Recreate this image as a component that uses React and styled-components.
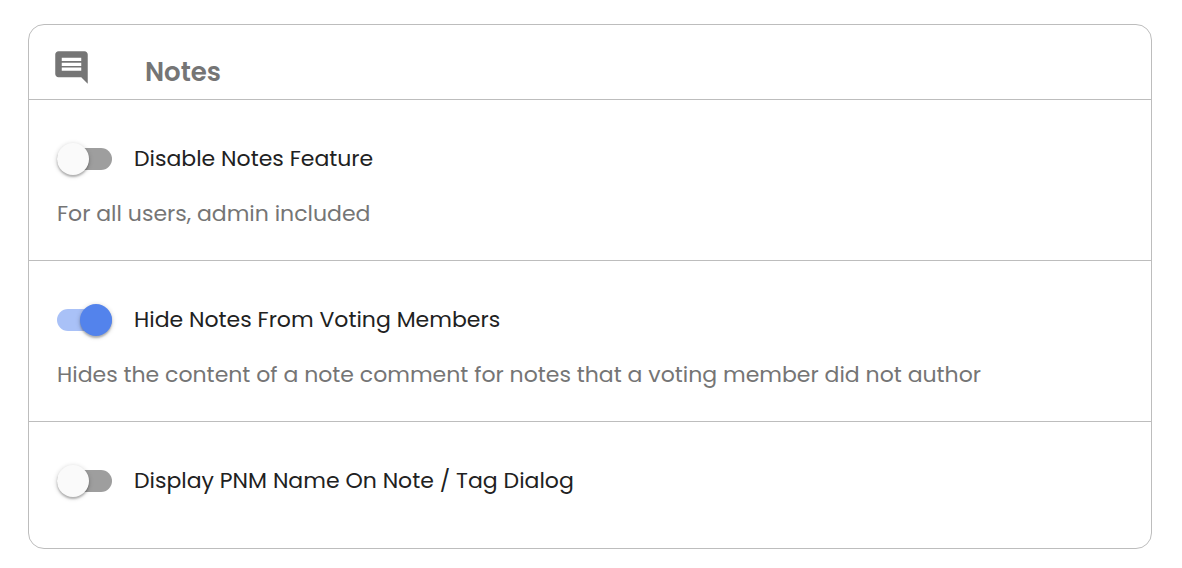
import React, { useState } from 'react'
import styled, { createGlobalStyle } from 'styled-components'
import { MdComment } from 'react-icons/md'

const GlobalStyle = createGlobalStyle`
    * {
        box-sizing: border-box;
    }
    body {
        margin: 0;
        background-color: #fff;
        font-family: Poppins, Inter, "Liberation Sans", sans-serif;
    }
`
const Page = styled.main`
    padding: 24px 30px 19px 28px;
`
const Card = styled.section`
    border: 1px solid #bdbdbd;
    border-radius: 16px;
    background-color: #fff;
`
const CardHeader = styled.header`
    display: flex;
    align-items: flex-start;
    gap: 54px;
    padding: 23px 23px 9px 23px;
    color: #757575;
    & > svg {
        flex-shrink: 0;
        width: 39px;
        height: 39px;
    }
    & > h2 {
        margin: 6px 0 0 0;
        font-size: 26px;
        font-weight: 600;
        line-height: 36px;
    }
`
const SettingRow = styled.div`
    border-top: 1px solid #bdbdbd;
    padding: 40px 28px 29px 28px;
`
const Control = styled.div`
    display: flex;
    align-items: center;
    gap: 22px;
    margin-bottom: 19px;
    & > label {
        color: #212121;
        font-size: 22px;
        line-height: 38px;
        cursor: pointer;
    }
`
const Switch = styled.input`
    appearance: none;
    display: flex;
    align-items: center;
    flex-shrink: 0;
    width: 55px;
    height: 22px;
    margin: 0;
    border-radius: 11px;
    background-color: #9e9e9e;
    cursor: pointer;
    &:before {
        display: block;
        content: '';
        flex-shrink: 0;
        width: 32px;
        height: 32px;
        border-radius: 50%;
        background-color: #fafafa;
        box-shadow: 0 1px 5px rgba(0,0,0,.2), 0 2px 2px rgba(0,0,0,.22);
    }
    &:checked {
        justify-content: flex-end;
        background-color: #a9c1f7;
    }
    &:checked:before {
        background-color: #5383ec;
    }
`
const Description = styled.p`
    margin: 0;
    color: #757575;
    font-size: 22px;
    line-height: 34px;
`

const settings = [
    {
        id: 'disable-notes',
        label: 'Disable Notes Feature',
        description: 'For all users, admin included',
        enabled: false,
    },
    {
        id: 'hide-notes',
        label: 'Hide Notes From Voting Members',
        description: 'Hides the content of a note comment for notes that a voting member did not author',
        enabled: true,
    },
    {
        id: 'display-pnm-name',
        label: 'Display PNM Name On Note / Tag Dialog',
        enabled: false,
    },
];

const Setting = ( { id, label, description, enabled } ) => {

    const [checked, setChecked] = useState(enabled);

    return (
        <SettingRow>
            <Control>
                <Switch
                    id={id}
                    type="checkbox"
                    role="switch"
                    checked={checked}
                    onChange={e => setChecked(e.target.checked)}
                />
                <label htmlFor={id}>{ label }</label>
            </Control>
            { description ? <Description>{ description }</Description> : '' }
        </SettingRow>
    )
}

const App = () => {

    const settingsList = settings.map(setting => {
        return (
            <Setting key={setting.id} {...setting} />
        )
    });

    return (
        <Page>
            <GlobalStyle />
            <Card>
                <CardHeader>
                    <MdComment />
                    <h2>Notes</h2>
                </CardHeader>
                {settingsList}
            </Card>
        </Page>
    )
}

export default App;
